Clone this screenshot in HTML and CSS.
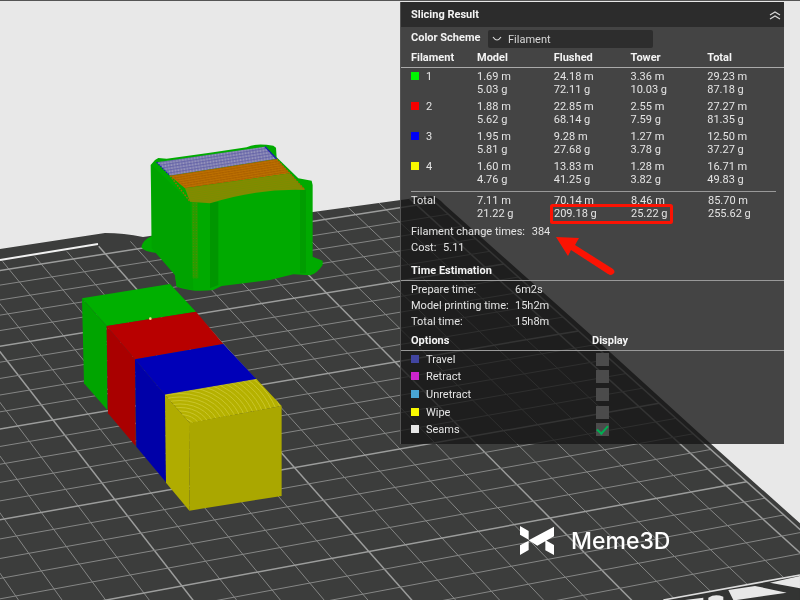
FILE: index.html
```html
<!DOCTYPE html>
<html lang="en">
<head>
<meta charset="utf-8">
<title>Slicing Result</title>
<link rel="stylesheet" href="styles.css">
</head>
<body>
<svg class="scene" viewBox="0 0 800 600" preserveAspectRatio="xMidYMid slice" aria-hidden="true">
  <defs>
    <clipPath id="bed-clip"><path d="M0 249L105 233Q124 233 143 237L313 212L430 196Q437 196 445 205L600 343L710 443L802 525V600H0Z"/></clipPath>
    <pattern id="weave-blue" width="9" height="9" patternUnits="userSpaceOnUse" patternTransform="rotate(-9)"><rect width="9" height="9" fill="#9a98bd"/><path d="M0 2H9M3 0V9" stroke="#5a5aa4" stroke-width="2.5"/></pattern>
    <pattern id="weave-orange" width="9" height="7" patternUnits="userSpaceOnUse" patternTransform="rotate(-9)"><rect width="9" height="7" fill="#bd7000"/><path d="M0 2H9M3 0V4" stroke="#a35a00" stroke-width="2"/></pattern>
    <pattern id="weave-olive" width="7" height="6" patternUnits="userSpaceOnUse" patternTransform="rotate(-9)"><rect width="7" height="6" fill="#788f00"/><path d="M0 2H7" stroke="#8d8200" stroke-width="2"/></pattern>
    <clipPath id="yellow-top"><path d="M285 375L560 328L635 408L360 460Z"/></clipPath>
  </defs>
  <rect width="800" height="600" fill="#e8e8e8"/>
  <g clip-path="url(#bed-clip)">
    <rect width="800" height="600" fill="#3c3d3c"/>
    <g id="grid"></g>
    <path d="M0 260L98 244" stroke="#f2f2f2" stroke-width="2"/>
  </g>
  <g transform="translate(600 300) scale(.3333)">
    <path d="M190 900L600 823V900Z" fill="#333433"/>
    <path d="M190 900L600 825" stroke="#ddd" stroke-width="5"/>
    <path d="M385 870L465 858L560 878L410 900H400ZM510 848L600 828V865ZM325 893Q345 880 370 890V900H325ZM255 900L310 893V900Z" fill="#e8e8e8"/>
  </g>
  <g transform="translate(130 130) scale(.3333)">
    <path d="M62 105L75 90L85 84L110 86L240 68L350 52Q375 38 430 47L438 53L440 82L505 145L545 152L548 165V380L578 392V405Q560 432 540 436L490 433L420 450L275 468L250 480Q190 488 140 470L135 435L85 370Q40 365 34 352Q38 330 65 318Z" fill="#00aa00"/>
    <path d="M65 105L180 215L190 480L140 470L135 435L65 355Z" fill="#00a300"/>
    <path d="M240 215H265V465L240 475Z" fill="#009600"/>
    <path d="M510 180H528V430H510Z" fill="#009d00"/>
    <path d="M185 215H203L205 445H188Z" fill="#249f00"/>
    <path d="M190 220V445M199 220V445" stroke="#777f00" stroke-width="2" stroke-dasharray="3 5"/>
    <path d="M80 97L405 50L440 87L120 137Z" fill="url(#weave-blue)"/>
    <path d="M120 137L440 87L480 130L165 175Z" fill="url(#weave-orange)"/>
    <path d="M165 175L480 130L525 180Q380 175 240 220L180 215Z" fill="url(#weave-olive)"/>
    <path d="M405 50L440 87" stroke="#1d1dae" stroke-width="4"/>
    <path d="M80 97L120 137" stroke="#1d1dae" stroke-width="4" stroke-dasharray="4 4"/>
    <path d="M440 87L525 180M120 137L180 215" stroke="#a66900" stroke-width="4" stroke-dasharray="5 4"/>
  </g>
  <g transform="translate(70 270) scale(.3333)">
    <path d="M36 85L300 42L378 125L110 168Z" fill="#00b000"/>
    <path d="M36 85L110 168L112 420L42 340Z" fill="#00a400"/>
    <path d="M110 168L378 125L460 222L195 268Z" fill="#b80000"/>
    <path d="M110 168L195 268L197 528L114 430Z" fill="#a90000"/>
    <path d="M195 268L460 222L560 328L285 375Z" fill="#0000b8"/>
    <path d="M195 268L285 375L288 637L199 530Z" fill="#0000a8"/>
    <path d="M285 375L560 328L635 408L360 460Z" fill="#b5b100"/>
    <path d="M285 375L360 460L358 722L288 638Z" fill="#b0ac00"/>
    <path d="M360 458L635 408V678L358 722Z" fill="#aaa700"/>
    <g id="arcs" clip-path="url(#yellow-top)" fill="none" stroke="#c9c52a" stroke-width="3"></g>
    <path d="M285 375L560 328" stroke="#d5cf20" stroke-width="2"/>
    <circle cx="241" cy="146" r="4" fill="#f0e080"/>
  </g>
</svg>

<main class="workspace">
  <section class="panel">
    <header class="panel-title">
      <h1>Slicing Result</h1>
      <button class="collapse" type="button" aria-label="Collapse">
        <svg viewBox="0 0 12 10" width="12" height="10"><path d="M1 5L6 2L11 5M1 9L6 6L11 9"/></svg>
      </button>
    </header>
    <div class="scheme">
      <label for="scheme">Color Scheme</label>
      <div class="select-box">
        <svg viewBox="0 0 10 6" width="10" height="6"><path d="M1 1Q5 7 9 1"/></svg>
        <select id="scheme"><option>Filament</option></select>
      </div>
    </div>
    <table class="usage">
      <thead><tr><th>Filament</th><th>Model</th><th>Flushed</th><th>Tower</th><th>Total</th></tr></thead>
      <tbody>
        <tr><td><i class="swatch green"></i>1</td><td>1.69 m<br>5.03 g</td><td>24.18 m<br>72.11 g</td><td>3.36 m<br>10.03 g</td><td>29.23 m<br>87.18 g</td></tr>
        <tr><td><i class="swatch red"></i>2</td><td>1.88 m<br>5.62 g</td><td>22.85 m<br>68.14 g</td><td>2.55 m<br>7.59 g</td><td>27.27 m<br>81.35 g</td></tr>
        <tr><td><i class="swatch blue"></i>3</td><td>1.95 m<br>5.81 g</td><td>9.28 m<br>27.68 g</td><td>1.27 m<br>3.78 g</td><td>12.50 m<br>37.27 g</td></tr>
        <tr><td><i class="swatch yellow"></i>4</td><td>1.60 m<br>4.76 g</td><td>13.83 m<br>41.25 g</td><td>1.28 m<br>3.82 g</td><td>16.71 m<br>49.83 g</td></tr>
      </tbody>
    </table>
    <table class="usage totals">
      <tbody><tr><td>Total</td><td>7.11 m<br>21.22 g</td><td>70.14 m<br>209.18 g</td><td>8.46 m<br>25.22 g</td><td>85.70 m<br>255.62 g</td></tr></tbody>
    </table>
    <div class="facts">
      <p>Filament change times: <span>384</span></p>
      <p>Cost: <span>5.11</span></p>
    </div>
    <h2>Time Estimation</h2>
    <dl class="times">
      <dt>Prepare time:</dt><dd>6m2s</dd>
      <dt>Model printing time:</dt><dd>15h2m</dd>
      <dt>Total time:</dt><dd>15h8m</dd>
    </dl>
    <h2 class="options-head"><span>Options</span><span>Display</span></h2>
    <div class="options">
      <div class="option"><label for="travel"><i class="swatch travel"></i>Travel</label><input id="travel" type="checkbox"></div>
      <div class="option"><label for="retract"><i class="swatch retract"></i>Retract</label><input id="retract" type="checkbox"></div>
      <div class="option"><label for="unretract"><i class="swatch unretract"></i>Unretract</label><input id="unretract" type="checkbox"></div>
      <div class="option"><label for="wipe"><i class="swatch yellow"></i>Wipe</label><input id="wipe" type="checkbox"></div>
      <div class="option"><label for="seams"><i class="swatch seams"></i>Seams</label><input id="seams" type="checkbox" checked></div>
    </div>
    <svg class="annotation" viewBox="0 0 384 442" aria-hidden="true">
      <rect x="150.5" y="203.5" width="120" height="17" rx="1" fill="none" stroke="#fb1303" stroke-width="3"/>
      <path d="M155 235L178 236L174 243L212 267Q215 270 212 272Q210 274 207 272L170 248L167 254Z" fill="#fb1303"/>
    </svg>
  </section>
  <div class="brand">
    <svg viewBox="0 0 102 87" width="34" height="29" aria-hidden="true"><path d="M0 0L26 15V41L0 26ZM26 43L102 2V31L52 59ZM26 44V72L0 87V58ZM76 42L102 57V87L76 73Z" fill="#fff"/></svg>
    <span>Meme3D</span>
  </div>
</main>
<script src="scene.js"></script>
</body>
</html>
```
FILE: styles.css
```css
* { box-sizing: border-box; }
body { margin: 0; min-height: 100vh; background: #e8e8e8; color: #e4e4e4; font: 11px/13px Roboto, "Liberation Sans", sans-serif; }
h1, h2, p, dl, dd { margin: 0; font-size: 11px; }
.scene { position: fixed; inset: 0; width: 100%; height: 100%; }
.workspace { position: relative; min-height: 100vh; border-top: 1px solid #555; padding-top: 1px; }
.panel { position: relative; width: 48%; min-width: 384px; margin: 0 2% 0 auto; padding-bottom: 5px; background: rgba(22, 22, 22, .78); border-left: 1px solid #555; }
.panel-title { display: flex; align-items: center; justify-content: space-between; height: 25px; padding: 0 1px 0 10px; background: rgba(20, 20, 20, .5); }
h1, h2, th, .scheme label { font-weight: 700; color: #f4f4f4; }
.collapse { display: flex; padding: 2px; border: 0; background: none; }
.collapse path, .select-box path { fill: none; stroke: #d8d8d8; stroke-width: 1.2; }
.scheme { display: flex; align-items: flex-start; height: 24px; padding: 3px 0 0 10px; }
.scheme label { width: 77px; line-height: 16px; }
.select-box { display: flex; align-items: center; gap: 6px; width: 165px; height: 18px; padding-left: 4px; border-radius: 2px; background: #2d2d2d; }
select { flex: 1; appearance: none; padding: 0; border: 0; background: none; color: #d8d8d8; font: inherit; }
.usage { width: 100%; table-layout: fixed; border-collapse: collapse; }
.usage th { height: 16px; padding: 0 0 2px; text-align: left; border-bottom: 1px solid #aaa; }
.usage td { padding: 2px 0; height: 30px; vertical-align: top; }
.usage th:first-child, .usage td:first-child { width: 76px; padding-left: 10px; }
.totals { width: calc(100% - 18px); margin: 3px 8px 0 10px; border-top: 1px solid #999; }
.totals td { width: 77px; padding-top: 2px; }
.totals td:first-child { width: 66px; padding-left: 0; }
.totals td:last-child { width: auto; }
.swatch { display: inline-block; width: 8px; height: 8px; margin-right: 7px; }
.green { background: #00f500; }
.red { background: #f50000; }
.blue { background: #0000f5; }
.yellow { background: #f8f800; }
.travel { background: #4145a0; }
.retract { background: #cc24cc; }
.unretract { background: #49a5d4; }
.seams { background: #e6e6e6; }
.facts { padding: 2px 10px 8px; line-height: 16px; }
.facts span { margin-left: 4px; }
h2 { padding: 0 10px 2px; border-bottom: 1px solid #999; line-height: 14px; }
.times { display: grid; grid-template-columns: 104px 1fr; padding: 1px 10px 4px; line-height: 16px; }
.options-head { display: grid; grid-template-columns: 181px 1fr; }
.options { display: grid; grid-template-rows: repeat(5, 1fr); height: 88px; padding-left: 10px; }
.option { display: grid; grid-template-columns: 185px 1fr; align-items: center; }
input { appearance: none; width: 13px; height: 13px; margin: 0; background: #4b4b4b; }
input:checked { display: grid; place-items: center; }
input:checked::before { content: ""; width: 9px; height: 5px; border: solid #00ae52; border-width: 0 0 2px 2px; transform: translateY(-1px) rotate(-48deg); }
.annotation { position: absolute; top: 0; left: 0; width: 384px; height: 442px; pointer-events: none; }
.brand { display: flex; align-items: center; gap: 17px; margin: 80px 0 0 65%; color: #fff; font: 500 23px/34px Inter, sans-serif; }
```
FILE: scene.js
```js
// Perspective projection of the build plate: unit square to the quad below,
// where one unit spans two major grid divisions (ten cells).
const quad = [[53, 420], [395, 362], [550, 518], [182, 586]];
const [[x0, y0], [x1, y1], [x2, y2], [x3, y3]] = quad;
const dx1 = x1 - x2, dx2 = x3 - x2, sx = x0 - x1 + x2 - x3;
const dy1 = y1 - y2, dy2 = y3 - y2, sy = y0 - y1 + y2 - y3;
const det = dx1 * dy2 - dx2 * dy1;
const g = (sx * dy2 - dx2 * sy) / det;
const h = (dx1 * sy - sx * dy1) / det;
const project = (col, row) => {
  const u = col / 10, v = row / 10, w = g * u + h * v + 1;
  return [((x1 - x0 + g * x1) * u + (x3 - x0 + h * x3) * v + x0) / w,
          ((y1 - y0 + g * y1) * u + (y3 - y0 + h * y3) * v + y0) / w];
};
const ns = "http://www.w3.org/2000/svg";
const grid = document.getElementById("grid");
const line = (a, b, major) => {
  const el = document.createElementNS(ns, "path");
  el.setAttribute("d", `M${project(...a)}L${project(...b)}`);
  el.setAttribute("stroke", major ? "#9c9d9c" : "#858685");
  el.setAttribute("stroke-width", major ? 1.5 : 1);
  grid.appendChild(el);
};
const left = -10, right = 15.6, far = -10.6, near = 15.5;
for (let c = left; c <= 15; c++) line([c, far], [c, near], c % 5 === 0);
for (let r = -10; r <= 15; r++) line([left, r], [right, r], r % 5 === 0);
line([right, far], [right, near], true);

const arcs = document.getElementById("arcs");
for (let r = 20; r < 330; r += 14) {
  const el = document.createElementNS(ns, "ellipse");
  el.setAttribute("cx", 330);
  el.setAttribute("cy", 480);
  el.setAttribute("rx", r);
  el.setAttribute("ry", r * 0.75);
  arcs.appendChild(el);
}
```
